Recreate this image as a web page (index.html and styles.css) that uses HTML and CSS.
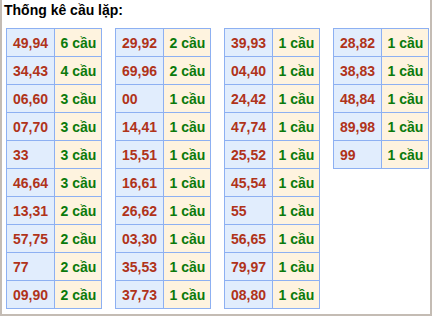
FILE: index.html
```html
<!DOCTYPE html>
<html>
<head>
<meta charset="utf-8">
<link rel="stylesheet" href="styles.css">
</head>
<body>
<div class="frame">
  <div class="title">Thống kê cầu lặp:</div>
  <div class="tables">
    <table class="t">
      <tr><td class="n">49,94</td><td class="c">6 cầu</td></tr>
      <tr><td class="n">34,43</td><td class="c">4 cầu</td></tr>
      <tr><td class="n">06,60</td><td class="c">3 cầu</td></tr>
      <tr><td class="n">07,70</td><td class="c">3 cầu</td></tr>
      <tr><td class="n">33</td><td class="c">3 cầu</td></tr>
      <tr><td class="n">46,64</td><td class="c">3 cầu</td></tr>
      <tr><td class="n">13,31</td><td class="c">2 cầu</td></tr>
      <tr><td class="n">57,75</td><td class="c">2 cầu</td></tr>
      <tr><td class="n">77</td><td class="c">2 cầu</td></tr>
      <tr><td class="n">09,90</td><td class="c">2 cầu</td></tr>
    </table>
    <table class="t">
      <tr><td class="n">29,92</td><td class="c">2 cầu</td></tr>
      <tr><td class="n">69,96</td><td class="c">2 cầu</td></tr>
      <tr><td class="n">00</td><td class="c">1 cầu</td></tr>
      <tr><td class="n">14,41</td><td class="c">1 cầu</td></tr>
      <tr><td class="n">15,51</td><td class="c">1 cầu</td></tr>
      <tr><td class="n">16,61</td><td class="c">1 cầu</td></tr>
      <tr><td class="n">26,62</td><td class="c">1 cầu</td></tr>
      <tr><td class="n">03,30</td><td class="c">1 cầu</td></tr>
      <tr><td class="n">35,53</td><td class="c">1 cầu</td></tr>
      <tr><td class="n">37,73</td><td class="c">1 cầu</td></tr>
    </table>
    <table class="t">
      <tr><td class="n">39,93</td><td class="c">1 cầu</td></tr>
      <tr><td class="n">04,40</td><td class="c">1 cầu</td></tr>
      <tr><td class="n">24,42</td><td class="c">1 cầu</td></tr>
      <tr><td class="n">47,74</td><td class="c">1 cầu</td></tr>
      <tr><td class="n">25,52</td><td class="c">1 cầu</td></tr>
      <tr><td class="n">45,54</td><td class="c">1 cầu</td></tr>
      <tr><td class="n">55</td><td class="c">1 cầu</td></tr>
      <tr><td class="n">56,65</td><td class="c">1 cầu</td></tr>
      <tr><td class="n">79,97</td><td class="c">1 cầu</td></tr>
      <tr><td class="n">08,80</td><td class="c">1 cầu</td></tr>
    </table>
    <table class="t">
      <tr><td class="n">28,82</td><td class="c">1 cầu</td></tr>
      <tr><td class="n">38,83</td><td class="c">1 cầu</td></tr>
      <tr><td class="n">48,84</td><td class="c">1 cầu</td></tr>
      <tr><td class="n">89,98</td><td class="c">1 cầu</td></tr>
      <tr><td class="n">99</td><td class="c">1 cầu</td></tr>
    </table>
  </div>
</div>
</body>
</html>
```
FILE: styles.css
```css
html, body {
  margin: 0;
  padding: 0;
  background: #ffffff;
}
.frame {
  box-sizing: border-box;
  width: 432px;
  height: 316px;
  border: 2px solid #c4bcb4;
  border-top: none;
  font-family: "Liberation Sans", Arial, sans-serif;
  font-weight: bold;
}
.title {
  font-size: 14px;
  color: #000;
  padding: 3px 0 0 2px;
  height: 28px;
  box-sizing: border-box;
  line-height: 15px;
}
.tables {
  display: flex;
  align-items: flex-start;
  padding-left: 4px;
  gap: 13px;
}
.t {
  border-collapse: collapse;
  font-size: 14px;
  width: 96px;
  table-layout: fixed;
}
.t tr {
  height: 28px;
}
.t td {
  border: 1px solid #8db0f2;
  padding: 0 0 0 6px;
}
.t .n {
  background: #e1edfd;
  color: #b0331a;
}
.t .c {
  background: #fef3df;
  color: #0b7a0b;
}
```
